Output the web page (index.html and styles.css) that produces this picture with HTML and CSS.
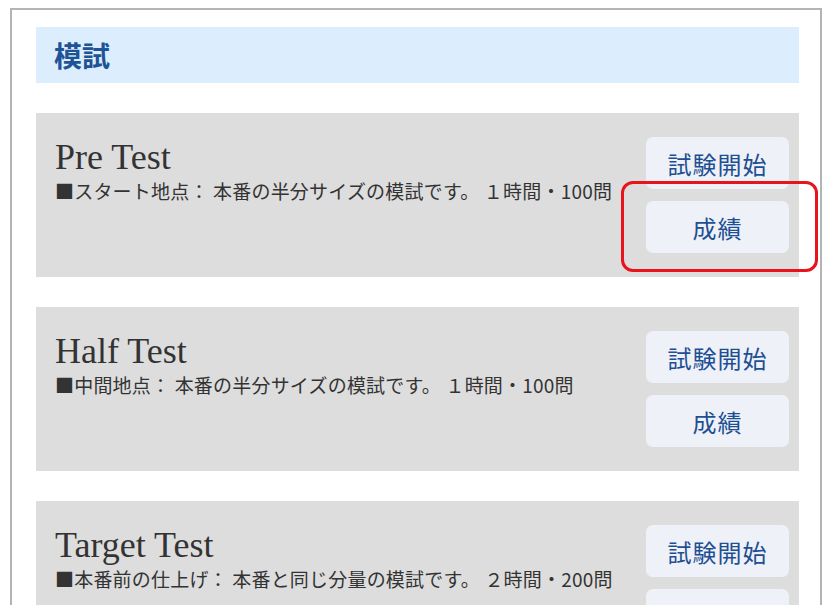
FILE: index.html
```html
<!DOCTYPE html>
<html lang="ja">
<head>
    <meta charset="UTF-8">
    <meta name="viewport" content="width=device-width, initial-scale=1.0">
    <title>模試</title>
    <link rel="stylesheet" href="styles.css">
</head>
<body>
    <div class="frame">
        <h2 class="section-title">模試</h2>

        <div class="test-card">
            <div class="test-info">
                <h3 class="test-name">Pre Test</h3>
                <p class="test-desc">■スタート地点： 本番の半分サイズの模試です。 １時間・100問</p>
            </div>
            <div class="test-actions">
                <button class="btn">試験開始</button>
                <button class="btn">成績</button>
            </div>
            <div class="highlight"></div>
        </div>

        <div class="test-card">
            <div class="test-info">
                <h3 class="test-name">Half Test</h3>
                <p class="test-desc">■中間地点： 本番の半分サイズの模試です。 １時間・100問</p>
            </div>
            <div class="test-actions">
                <button class="btn">試験開始</button>
                <button class="btn">成績</button>
            </div>
        </div>

        <div class="test-card">
            <div class="test-info">
                <h3 class="test-name">Target Test</h3>
                <p class="test-desc">■本番前の仕上げ： 本番と同じ分量の模試です。 ２時間・200問</p>
            </div>
            <div class="test-actions">
                <button class="btn">試験開始</button>
                <button class="btn">成績</button>
            </div>
        </div>
    </div>
</body>
</html>
```

FILE: styles.css
```css
body {
    font-family: "Noto Sans CJK JP", "Noto Sans", sans-serif;
    margin: 0;
    padding: 0;
    background: #fff;
}
.frame {
    width: 812px;
    margin: 8px 0 0 10px;
    padding: 17px 21px 30px 24px;
    border: 2px solid #b4b4b4;
    border-bottom: none;
    box-sizing: border-box;
}
.section-title {
    margin: 0 0 30px 0;
    height: 56px;
    padding-left: 18px;
    background-color: #dcedfd;
    color: #1e5395;
    font-size: 28px;
    font-weight: bold;
    line-height: 56px;
}
.test-card {
    position: relative;
    display: flex;
    justify-content: space-between;
    background-color: #dddddd;
    padding: 24px 10px 24px 19px;
    margin-bottom: 30px;
}
.test-name {
    margin: 0;
    font-family: "Liberation Serif", serif;
    font-weight: normal;
    font-size: 36px;
    line-height: 40px;
    color: #333;
}
.test-desc {
    margin: 1px 0 0 0;
    font-size: 19px;
    line-height: 26px;
    letter-spacing: 0.2px;
    color: #333;
}
.test-actions {
    display: flex;
    flex-direction: column;
    gap: 12px;
}
.btn {
    width: 143px;
    height: 52px;
    border: none;
    border-radius: 7px;
    background-color: #eef2f8;
    color: #1e4f92;
    font-family: "Noto Sans CJK JP", sans-serif;
    font-size: 24px;
    letter-spacing: 1px;
    cursor: pointer;
}
.highlight {
    position: absolute;
    left: 585px;
    top: 68px;
    width: 197px;
    height: 91px;
    border: 3px solid #e8141c;
    border-radius: 12px;
    box-sizing: border-box;
}
```
